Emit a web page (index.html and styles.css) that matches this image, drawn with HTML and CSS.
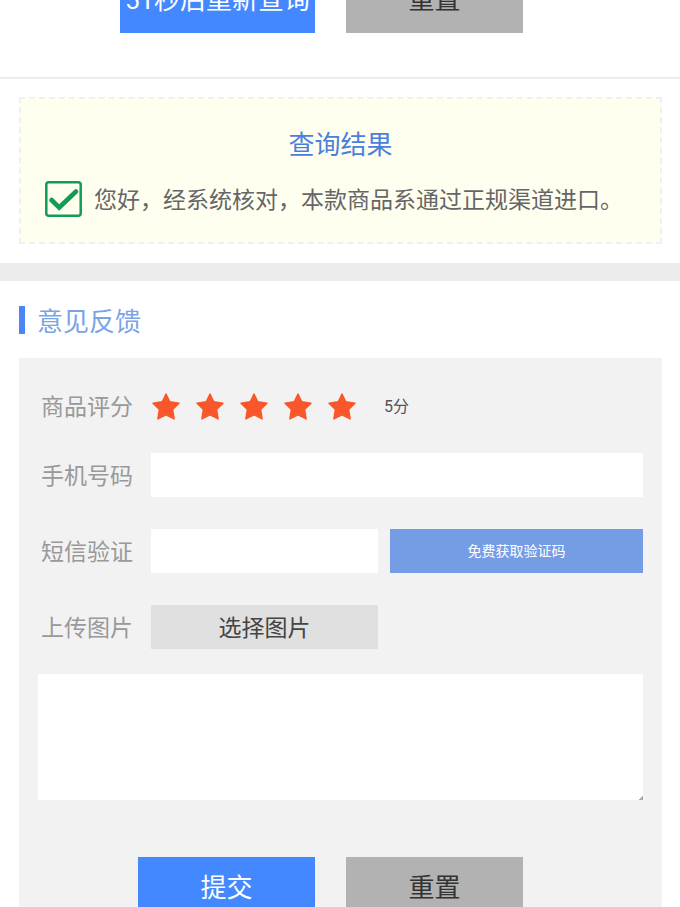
FILE: index.html
```html
<!DOCTYPE html>
<html lang="zh-CN">
<head>
    <meta charset="UTF-8">
    <meta name="viewport" content="width=device-width, initial-scale=1.0">
    <title>查询结果</title>
    <link rel="stylesheet" href="styles.css">
</head>
<body>

<svg class="sprite" aria-hidden="true">
    <symbol id="star" viewBox="0 0 28 27">
        <path d="M14 1 L17.8 8.8 L27 10.2 L20.6 16.4 L22.2 26 L14 21.8 L5.8 26 L7.4 16.4 L1 10.2 L10.2 8.8 Z" stroke-width="1.4" stroke-linejoin="round"/>
    </symbol>
</svg>

<section class="query">
    <div class="actions">
        <button type="button" class="btn btn-primary btn-wide">51秒后重新查询</button>
        <button type="button" class="btn btn-reset">重置</button>
    </div>
</section>

<section class="result">
    <div class="result-box">
        <h2>查询结果</h2>
        <div class="result-text">
            <svg class="check" viewBox="0 0 37 36" aria-hidden="true">
                <rect x="1.3" y="1.3" width="34.4" height="33.4" rx="2.5" fill="none" stroke-width="2.5"/>
                <path d="M6.5 19 L14.2 26.5 L31 10.5" fill="none" stroke-width="4.6" stroke-linecap="round"/>
            </svg>
            <p>您好，经系统核对，本款商品系通过正规渠道进口。</p>
        </div>
    </div>
</section>

<section class="feedback">
    <h2>意见反馈</h2>
    <form class="panel">
        <div class="row row-score">
            <span class="name" id="score-label">商品评分</span>
            <div class="stars" role="radiogroup" aria-labelledby="score-label">
                <label><input type="radio" name="score" value="1" aria-label="1分"><svg><use href="#star"/></svg></label>
                <label><input type="radio" name="score" value="2" aria-label="2分"><svg><use href="#star"/></svg></label>
                <label><input type="radio" name="score" value="3" aria-label="3分"><svg><use href="#star"/></svg></label>
                <label><input type="radio" name="score" value="4" aria-label="4分"><svg><use href="#star"/></svg></label>
                <label><input type="radio" name="score" value="5" aria-label="5分" checked><svg><use href="#star"/></svg></label>
            </div>
            <span class="score">5分</span>
        </div>
        <div class="row">
            <label class="name" for="phone">手机号码</label>
            <input class="field" type="tel" id="phone">
        </div>
        <div class="row">
            <label class="name" for="code">短信验证</label>
            <div class="split">
                <input class="field" type="text" id="code">
                <button type="button" class="btn-code">免费获取验证码</button>
            </div>
        </div>
        <div class="row">
            <label class="name" for="picture">上传图片</label>
            <div class="split">
                <button type="button" class="btn-file" id="picture">选择图片</button>
            </div>
        </div>
        <textarea class="message" aria-label="意见反馈"></textarea>
        <div class="actions">
            <button type="submit" class="btn btn-primary">提交</button>
            <button type="reset" class="btn btn-reset">重置</button>
        </div>
    </form>
</section>

</body>
</html>
```

FILE: styles.css
```css
* {
    margin: 0;
    padding: 0;
    box-sizing: border-box;
}

body {
    height: 100vh;
    overflow: hidden;
    background: #fff;
    font-family: Roboto, "Noto Sans CJK SC", sans-serif;
    color: #666;
}

button,
input,
textarea {
    font-family: inherit;
    border: none;
    border-radius: 0;
}

button {
    padding-bottom: 2px;
    cursor: pointer;
    white-space: nowrap;
}

h2 {
    font-size: 26px;
    font-weight: 400;
    line-height: 36px;
}

.sprite {
    display: none;
}

.query {
    margin-top: -35px;
    padding: 0 18px 44px 19px;
    border-bottom: 2px solid #ececec;
}

.actions {
    display: flex;
    justify-content: flex-end;
    gap: 31px;
    padding-right: 139px;
}

.btn {
    width: 177px;
    height: 60px;
    padding-bottom: 4px;
    font-size: 26px;
}

.query .btn {
    height: 68px;
}

.btn-wide {
    width: 195px;
}

.btn-primary {
    background: #4488ff;
    color: #fff;
}

.btn-reset {
    background: #b2b2b2;
    color: #333;
}

.result {
    padding: 18px 18px 19px 19px;
    border-bottom: 18px solid #ececec;
}

.result-box {
    padding: 28px 24px 25px;
    background: #fffff0;
    border: 2px dashed #f0f0ee;
}

.result-box h2 {
    color: #4a80dc;
    text-align: center;
}

.result-text {
    display: flex;
    align-items: center;
    gap: 12px;
    margin-top: 18px;
    font-size: 23px;
    line-height: 32px;
}

.result-text p {
    padding-top: 4px;
}

.check {
    flex: none;
    width: 37px;
    height: 36px;
    stroke: #129c55;
}

.feedback {
    padding: 21px 18px 0 19px;
}

.feedback h2 {
    display: flex;
    align-items: flex-start;
    gap: 12px;
    line-height: 40px;
    color: #7ba3e6;
}

.feedback h2::before {
    content: "";
    width: 6px;
    height: 28px;
    margin-top: 4px;
    background: #4a86f7;
}

.panel {
    margin-top: 16px;
    padding: 30px 19px 24px;
    background: #f2f2f2;
}

.row {
    display: grid;
    grid-template-columns: 113px 1fr;
    align-items: center;
    height: 44px;
    margin-bottom: 32px;
}

.row-score {
    grid-template-columns: 113px auto 1fr;
    height: 32px;
    margin-bottom: 33px;
}

.name {
    padding: 0 0 2px 3px;
    font-size: 23px;
    color: #999;
}

.stars {
    display: flex;
    gap: 15px;
}

.stars label {
    position: relative;
    display: flex;
    padding-left: 1px;
    cursor: pointer;
}

.stars input {
    position: absolute;
    opacity: 0;
}

.stars svg {
    width: 28px;
    height: 27px;
    fill: #f9572b;
    stroke: #f9572b;
}

.score {
    margin-left: 28px;
    padding-bottom: 2px;
    font-size: 16px;
    color: #555;
}

.field {
    width: 100%;
    height: 44px;
    padding: 0 10px;
    background: #fff;
    font-size: 22px;
}

.split {
    display: grid;
    grid-template-columns: 227fr 253fr;
    gap: 12px;
}

.btn-code {
    height: 44px;
    background: #759de5;
    color: #fff;
    font-size: 14px;
}

.btn-file {
    height: 44px;
    background: #e0e0e0;
    color: #444;
    font-size: 23px;
}

.message {
    display: block;
    width: 100%;
    height: 126px;
    margin: -7px 0 57px;
    padding: 10px;
    background: linear-gradient(135deg, #fff 50%, #aaa 50%) no-repeat right bottom / 4px 4px #fff;
    font-size: 22px;
    resize: none;
}

.panel .actions {
    padding-right: 120px;
}
```
